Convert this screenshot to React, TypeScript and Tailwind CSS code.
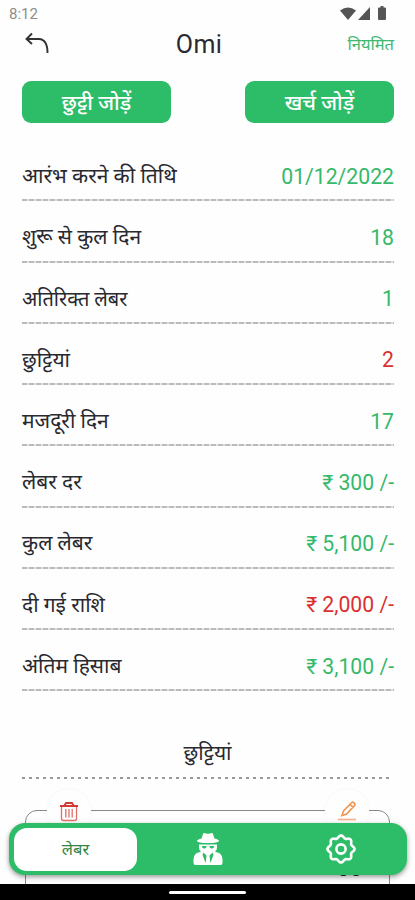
const rows = [
  { label: "आरंभ करने की तिथि", value: "01/12/2022" },
  { label: "शुरू से कुल दिन", value: "18" },
  { label: "अतिरिक्त लेबर", value: "1", compact: true },
  { label: "छुट्टियां", value: "2", due: true },
  { label: "मजदूरी दिन", value: "17" },
  { label: "लेबर दर", value: "₹ 300 /-" },
  { label: "कुल लेबर", value: "₹ 5,100 /-" },
  { label: "दी गई राशि", value: "₹ 2,000 /-", due: true },
  { label: "अंतिम हिसाब", value: "₹ 3,100 /-" },
];

// scalloped ring with eight rounded teeth
const gearPoints = Array.from({ length: 120 }, (_, i) => {
  const a = (i / 120) * Math.PI * 2;
  const r = 12.3 + 1.2 * Math.cos(8 * a);
  return `${(15 + r * Math.cos(a)).toFixed(2)},${(15 + r * Math.sin(a)).toFixed(2)}`;
}).join(" ");

function StatusBar() {
  return (
    <div className="flex h-7 items-center justify-between pl-[9px] pr-[29px] text-[15px] text-[#8d8d8d]">
      <span>8:12</span>
      <div className="flex items-center pb-[2px] text-[#555]">
        <svg width="16" height="13" viewBox="0 0 16 13" fill="currentColor">
          <path d="M0 3.5Q8-2.5 16 3.5L8 13z" />
        </svg>
        <svg className="ml-[2px]" width="12" height="13" viewBox="0 0 12 13" fill="currentColor">
          <path d="M12 0v13H0z" />
        </svg>
        <svg className="ml-[8px]" width="8" height="14" viewBox="0 0 8 14" fill="currentColor">
          <path d="M2.5 0h3v1.5h1.5a1 1 0 0 1 1 1V13a1 1 0 0 1-1 1H1a1 1 0 0 1-1-1V2.5a1 1 0 0 1 1-1h1.5z" />
        </svg>
      </div>
    </div>
  );
}

function TrashIcon() {
  return (
    <svg width="20" height="21" viewBox="0 0 20 21" fill="none" stroke="#e0706c" strokeWidth="1.3">
      <path d="M2.5 6v11.5q0 2 2 2h11q2 0 2-2V6M6.8 8v8.5M10 8v8.5M13.2 8v8.5" />
      <path d="M1 5h18M5.5 4.5L7 2h6l1.5 2.5" strokeWidth="2" stroke="#d33a36" />
    </svg>
  );
}

function PencilIcon() {
  return (
    <svg width="20" height="20" viewBox="0 0 20 20" fill="none" stroke="#f0954f" strokeWidth="1.6">
      <path d="M5 14.5l1.5-4.5L14.5 1.8q1.2-1.2 2.2-.2l.8.8q1 1 0 2.2L9.5 13zM13 3.5l3.2 3" />
      <path d="M1 18.5h18" stroke="#f5b183" />
    </svg>
  );
}

function SpyIcon() {
  return (
    <svg width="30" height="34" viewBox="0 0 30 34" fill="#fff">
      <path d="M8.5 6.5L10 2q.7-1.5 2.2-.8Q15 2.5 17.8 1.2 19.3.5 20 2l1.5 4.5q4.5 1 4.5 2.5-1 2-11 2T4 9q0-1.5 4.5-2.5z" />
      <path d="M6 12.5h18v3q0 3-2 4l5 2q2.5 2 2.5 6V31q0 2-2 2h-25q-2 0-2-2v-3.5q0-4 2.5-6l5-2q-2-1-2-4z" />
      <path d="M9 14h4.5v1q-1 1.5-2.3 1.5T9 15zM16.5 14H21v1q-1 1.5-2.2 1.5T16.5 15z" fill="#2dbd68" />
      <path d="M10.5 20.5l3 3-.8 7.5-3.2-8zM19.5 20.5l-3 3 .8 7.5 3.2-8z" fill="#2dbd68" />
    </svg>
  );
}

function GearIcon() {
  return (
    <svg width="30" height="30" viewBox="0 0 30 30" fill="none" stroke="#fff" strokeWidth="2.6" strokeLinejoin="round">
      <polygon points={gearPoints} />
      <circle cx="15" cy="15" r="4.6" />
    </svg>
  );
}

export default function App() {
  return (
    <div className="relative h-[900px] w-[415px] overflow-hidden bg-[#fefefe] font-['Roboto','Noto_Sans',sans-serif] text-[#29292f]">
      <StatusBar />
      <header className="mt-[2px] grid h-[30px] grid-cols-[124px_108px_141px] items-center px-[21px]">
        <svg className="mb-[7px] ml-[4px]" width="24" height="22" viewBox="0 0 24 22" fill="none" stroke="#333" strokeWidth="1.9">
          <path d="M7 1.5L1.5 7 7 12M1.5 7H14Q22.5 7.5 22.5 21" />
        </svg>
        <h1 className="pb-[2px] text-center text-[25px] leading-[30px] tracking-[0.4px]">Omi</h1>
        <span className="pb-[2px] text-right text-[16.5px] text-[#3fb872]">नियमित</span>
      </header>
      <div className="mt-[21px] flex justify-between pl-[22px] pr-[21px]">
        <button className="h-[42px] w-[149px] rounded-[9px] bg-[#2dbd68] pt-[3px] text-[21px] font-medium text-white">छुट्टी जोड़ें</button>
        <button className="h-[42px] w-[149px] rounded-[9px] bg-[#2dbd68] pt-[3px] text-[21px] font-medium text-white">खर्च जोड़ें</button>
      </div>
      <div className="mt-[17px] pl-[22px] pr-[21px]">
        {rows.map((row) => (
          <div key={row.label} className="h-[61.25px]">
            <div className="flex h-[59.25px] items-center justify-between pt-[14px]">
              <span className={row.compact ? "text-[20px]" : "text-[21px]"}>{row.label}</span>
              <span className={`text-[21.2px] ${row.due ? "text-[#d9302f]" : "text-[#35b96b]"}`}>{row.value}</span>
            </div>
            <div className="h-[2px] bg-[repeating-linear-gradient(90deg,#bababa_0_5px,#e2e2e2_5px_7px)]" />
          </div>
        ))}
      </div>
      <h2 className="mt-[47px] text-center text-[21px] leading-[30px]">छुट्टियां</h2>
      <div className="mx-[22px] mt-[9px] h-[2px] bg-[repeating-linear-gradient(90deg,#999_0_3px,transparent_3px_7px)]" />
      <div className="relative mx-[25px] mt-[31px] h-[120px] rounded-[12px] border border-[#888]">
        <div className="absolute -top-[22px] left-[21px] flex size-[44px] items-center justify-center rounded-full bg-[#fefefe] shadow-[0_0_3px_#0000000d]">
          <TrashIcon />
        </div>
        <div className="absolute -top-[22px] right-[20px] flex size-[44px] items-center justify-center rounded-full bg-[#fefefe] shadow-[0_0_3px_#0000000d]">
          <PencilIcon />
        </div>
        <span className="absolute right-[27px] top-[41px] text-[22px]">30</span>
      </div>
      <nav className="absolute left-[9px] top-[823px] grid h-[52px] w-[398px] grid-cols-3 items-center rounded-[16px] bg-[#2dbd68] shadow-[0_2px_5px_#0006]">
        <div className="ml-[5px] flex h-[43px] w-[123px] items-center justify-center rounded-[13px] bg-white pt-[2px] text-[16.5px] text-[#348443]">लेबर</div>
        <div className="flex justify-center">
          <SpyIcon />
        </div>
        <div className="flex justify-center">
          <GearIcon />
        </div>
      </nav>
      <div className="absolute bottom-0 flex h-[16px] w-full justify-center bg-black pt-[7px]">
        <div className="h-[3px] w-[77px] rounded-full bg-white" />
      </div>
    </div>
  );
}
